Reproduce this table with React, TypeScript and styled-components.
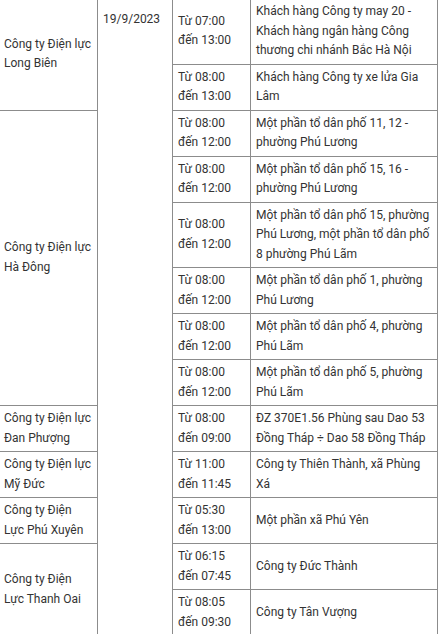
import styled, { createGlobalStyle } from 'styled-components';

const GlobalStyle = createGlobalStyle`
  html, body {
    margin: 0;
    padding: 0;
    background: #ffffff;
  }
`;

// the screenshot is a crop of a longer article table: top and left edges sit just off-screen
const Viewport = styled.div`
  width: 441px;
  height: 634px;
  overflow: hidden;
  background: #ffffff;
`;

const Table = styled.table`
  width: 440px;
  margin: -2px 0 0 -2px;
  border-collapse: collapse;
  table-layout: fixed;
  font-family: Roboto, 'Liberation Sans', Arial, sans-serif;
  font-size: 12px;
  line-height: 19.5px;
  color: #333333;
`;

const Cell = styled.td<{ $top?: boolean }>`
  border: 1px solid #8c8c8c;
  padding: 3px 4px 3px 5px;
  vertical-align: ${({ $top }) => ($top ? 'top' : 'middle')};
  padding-top: ${({ $top }) => ($top ? '11px' : '3px')};
`;

type Slot = { time: [string, string]; area: string };
type Unit = { name: string; slots: Slot[] };

const units: Unit[] = [
  {
    name: 'Công ty Điện lực Long Biên',
    slots: [
      {
        time: ['Từ 07:00', 'đến 13:00'],
        area: 'Khách hàng Công ty may 20 - Khách hàng ngân hàng Công thương chi nhánh Bắc Hà Nội',
      },
      { time: ['Từ 08:00', 'đến 13:00'], area: 'Khách hàng Công ty xe lửa Gia Lâm' },
    ],
  },
  {
    name: 'Công ty Điện lực Hà Đông',
    slots: [
      { time: ['Từ 08:00', 'đến 12:00'], area: 'Một phần tổ dân phố 11, 12 - phường Phú Lương' },
      { time: ['Từ 08:00', 'đến 12:00'], area: 'Một phần tổ dân phố 15, 16 - phường Phú Lương' },
      {
        time: ['Từ 08:00', 'đến 12:00'],
        area: 'Một phần tổ dân phố 15, phường Phú Lương, một phần tổ dân phố 8 phường Phú Lãm',
      },
      { time: ['Từ 08:00', 'đến 12:00'], area: 'Một phần tổ dân phố 1, phường Phú Lương' },
      { time: ['Từ 08:00', 'đến 12:00'], area: 'Một phần tổ dân phố 4, phường Phú Lãm' },
      { time: ['Từ 08:00', 'đến 12:00'], area: 'Một phần tổ dân phố 5, phường Phú Lãm' },
    ],
  },
  {
    name: 'Công ty Điện lực Đan Phượng',
    slots: [
      {
        time: ['Từ 08:00', 'đến 09:00'],
        area: 'ĐZ 370E1.56 Phùng sau Dao 53 Đồng Tháp ÷ Dao 58 Đồng Tháp',
      },
    ],
  },
  {
    name: 'Công ty Điện lực Mỹ Đức',
    slots: [{ time: ['Từ 11:00', 'đến 11:45'], area: 'Công ty Thiên Thành, xã Phùng Xá' }],
  },
  {
    name: 'Công ty Điện Lực Phú Xuyên',
    slots: [{ time: ['Từ 05:30', 'đến 13:00'], area: 'Một phần xã Phú Yên' }],
  },
  {
    name: 'Công ty Điện Lực Thanh Oai',
    slots: [
      { time: ['Từ 06:15', 'đến 07:45'], area: 'Công ty Đức Thành' },
      { time: ['Từ 08:05', 'đến 09:30'], area: 'Công ty Tân Vượng' },
    ],
  },
];

const totalRows = units.reduce((n, u) => n + u.slots.length, 0);

export default function App() {
  return (
    <Viewport>
      <GlobalStyle />
      <Table>
        <colgroup>
          <col style={{ width: 99 }} />
          <col style={{ width: 75 }} />
          <col style={{ width: 78 }} />
          <col />
        </colgroup>
        <tbody>
          {units.map((unit, ui) =>
            unit.slots.map((slot, si) => (
              <tr key={`${ui}-${si}`}>
                {si === 0 && <Cell rowSpan={unit.slots.length}>{unit.name}</Cell>}
                {ui === 0 && si === 0 && (
                  <Cell rowSpan={totalRows} $top>
                    19/9/2023
                  </Cell>
                )}
                <Cell>
                  {slot.time[0]}
                  <br />
                  {slot.time[1]}
                </Cell>
                <Cell>{slot.area}</Cell>
              </tr>
            )),
          )}
        </tbody>
      </Table>
    </Viewport>
  );
}
